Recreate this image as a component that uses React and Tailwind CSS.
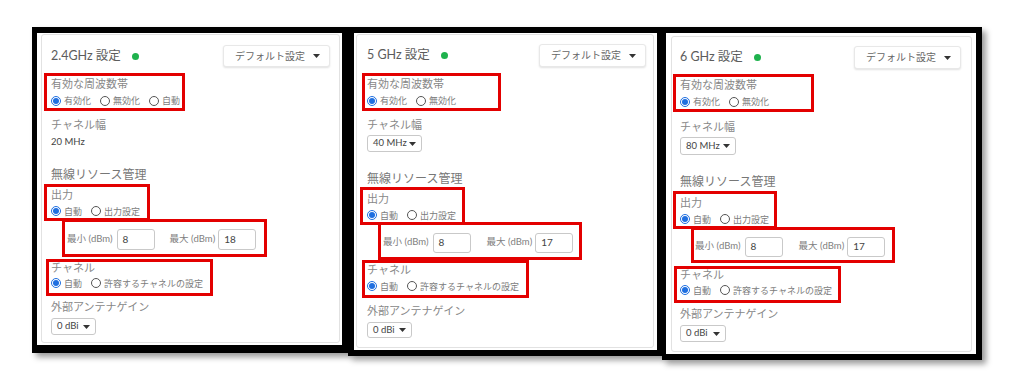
const Caret = ({ className = "" }) => (
  <svg width="7" height="4" viewBox="0 0 7 4" className={className}>
    <path d="M0 0h7L3.5 4z" fill="#333" />
  </svg>
);

const Radio = ({ label, checked }) => (
  <span className="flex items-center gap-[3px]">
    {checked ? (
      <span className="w-[10px] h-[10px] rounded-full border border-[#1f6fe0] flex items-center justify-center">
        <span className="w-[6px] h-[6px] rounded-full bg-[#1f6fe0]" />
      </span>
    ) : (
      <span className="w-[10px] h-[10px] rounded-full border border-[#555]" />
    )}
    <span className="text-[9px] text-[#7c7c7c] leading-none">{label}</span>
  </span>
);

const Select = ({ value, className }) => (
  <div
    className={`flex items-center justify-between border border-[#c9c9c9] rounded-[3px] bg-white pl-[5px] pr-[5px] text-[9.5px] text-[#444] ${className}`}
  >
    <span>{value}</span>
    <Caret />
  </div>
);

const Field = ({ value, className }) => (
  <div
    className={`flex items-center w-[38px] border border-[#c9c9c9] rounded-[3px] bg-white pl-[5px] text-[10px] text-[#444] ${className}`}
  >
    {value}
  </div>
);

const panels = [
  {
    title: "2.4GHz 設定",
    bands: ["有効化", "無効化", "自動"],
    chWidth: null,
    max: "18",
    frame: "w-[316px] border-t-[6px] border-l-[5px] border-r-[6px] border-b-[8px] pt-[1px] pl-[4px] pr-[2px] pb-[2px]",
    card: "h-[309px] pt-[10px] pl-[9px] pr-[9px]",
    header: "h-[22px]",
    box1: "mt-[6px] h-[38px] -ml-[7px] pl-[4px] w-[141px]",
    cw: "mt-[6px]",
    cwValue: "mt-[1px]",
    rrm: "mt-[16px]",
    outBox: "mt-0 h-[37px] -ml-[7px] pl-[4px] w-[106px]",
    outLabel: "h-[17px]",
    outRadios: "h-[14px]",
    box2: "-mt-[2px] h-[38px] ml-[11px] pl-[2px] w-[205px]",
    input: "h-[21px]",
    label2: "ml-[15px]",
    box3: "mt-[2px] h-[37px] -ml-[5px] pl-[2px] w-[167px]",
    chLabel: "h-[12px]",
    chRadios: "h-[18px]",
    ext: "mt-[2px]",
    ant: "mt-[2px] h-[17px] w-[45px]",
  },
  {
    title: "5 GHz 設定",
    bands: ["有効化", "無効化"],
    chWidth: "40 MHz",
    max: "17",
    frame: "w-[314px] border-t-[6px] border-l-[6px] border-r-[5px] border-b-[6px] pt-[1px] pl-[2px] pr-[3px] pb-[2px]",
    card: "h-[314px] pt-[9px] pl-[10px] pr-[7px]",
    header: "h-[23px]",
    box1: "mt-[6px] h-[38px] -ml-[5px] pl-[2px] w-[139px]",
    cw: "mt-[6px]",
    cwSelect: "mt-[2px] h-[17px] w-[55px]",
    rrm: "mt-[18px]",
    outBox: "-mt-[1px] h-[38px] -ml-[7px] pl-[4px] w-[105px]",
    outLabel: "h-[18px]",
    outRadios: "h-[14px]",
    box2: "-mt-[3px] h-[38px] ml-[11px] pl-[2px] w-[204px]",
    input: "h-[20px]",
    label2: "ml-[16px]",
    box3: "mt-0 h-[38px] -ml-[5px] pl-[2px] w-[167px]",
    chLabel: "h-[14px]",
    chRadios: "h-[18px]",
    ext: "mt-[4px]",
    ant: "mt-[2px] h-[16px] w-[45px]",
  },
  {
    title: "6 GHz 設定",
    bands: ["有効化", "無効化"],
    chWidth: "80 MHz",
    max: "17",
    frame: "w-[320px] border-t-[6px] border-l-[4px] border-r-[6px] border-b-[6px] pt-[3px] pl-[5px] pr-[4px] pb-[2px]",
    card: "h-[316px] pt-[9px] pl-[8px] pr-[10px]",
    header: "h-[23px]",
    box1: "mt-[5px] h-[38px] -ml-[7px] pl-[4px] w-[141px]",
    cw: "mt-[7px]",
    cwSelect: "mt-[2px] h-[18px] w-[56px]",
    rrm: "mt-[18px]",
    outBox: "mt-0 h-[38px] -ml-[7px] pl-[4px] w-[104px]",
    outLabel: "h-[18px]",
    outRadios: "h-[14px]",
    box2: "-mt-[2px] h-[36px] ml-[11px] pl-[1px] w-[204px]",
    input: "h-[20px]",
    label2: "ml-[16px]",
    box3: "mt-[3px] h-[37px] -ml-[6px] pl-[3px] w-[167px]",
    chLabel: "h-[12px]",
    chRadios: "h-[18px]",
    ext: "mt-[2px]",
    ant: "mt-[2px] h-[17px] w-[46px]",
  },
];

const Panel = ({ p }) => (
  <div className={`bg-white border-black shadow-[4px_4px_6px_rgba(0,0,0,0.4)] ${p.frame}`}>
    <div className={`flex flex-col border border-[#e2e2e2] rounded-[3px] bg-white ${p.card}`}>
      <div className={`flex items-center justify-between ${p.header}`}>
        <div className="flex items-center">
          <span className="text-[12.5px] text-[#5c5c5c]">{p.title}</span>
          <span className="ml-[11px] w-[7px] h-[7px] rounded-full bg-[#1fb24d]" />
        </div>
        <div className="h-full flex items-center gap-[8px] pl-[11px] pr-[9px] bg-white border border-[#e8e8e8] rounded-[3px] shadow-[0_1px_2px_rgba(0,0,0,0.12)] text-[10px] text-[#666]">
          デフォルト設定
          <Caret />
        </div>
      </div>

      <div className={`flex flex-col border-[3px] border-[#e30000] ${p.box1}`}>
        <div className="h-[17px] flex items-center text-[11px] text-[#888]">有効な周波数帯</div>
        <div className="h-[15px] flex items-center gap-[9px]">
          {p.bands.map((b, i) => (
            <Radio key={b} label={b} checked={i === 0} />
          ))}
        </div>
      </div>

      <div className={`h-[16px] flex items-center text-[11px] text-[#888] ${p.cw}`}>チャネル幅</div>
      {p.chWidth ? (
        <Select value={p.chWidth} className={p.cwSelect} />
      ) : (
        <div className={`h-[16px] flex items-center text-[9.5px] text-[#444] ${p.cwValue}`}>20 MHz</div>
      )}

      <div className={`h-[18px] flex items-center text-[12px] text-[#777] ${p.rrm}`}>無線リソース管理</div>

      <div className={`flex flex-col border-[3px] border-[#e30000] ${p.outBox}`}>
        <div className={`flex items-center text-[11px] text-[#888] ${p.outLabel}`}>出力</div>
        <div className={`flex items-center gap-[9px] ${p.outRadios}`}>
          <Radio label="自動" checked />
          <Radio label="出力設定" />
        </div>
      </div>

      <div className={`flex items-center pt-[3px] border-[3px] border-[#e30000] text-[9.5px] text-[#808080] ${p.box2}`}>
        <span>最小 (dBm)</span>
        <Field value="8" className={`ml-[4px] ${p.input}`} />
        <span className={p.label2}>最大 (dBm)</span>
        <Field value={p.max} className={`ml-[3px] ${p.input}`} />
      </div>

      <div className={`flex flex-col border-[3px] border-[#e30000] ${p.box3}`}>
        <div className={`flex items-center text-[11px] text-[#888] ${p.chLabel}`}>チャネル</div>
        <div className={`flex items-center gap-[9px] ${p.chRadios}`}>
          <Radio label="自動" checked />
          <Radio label="許容するチャネルの設定" />
        </div>
      </div>

      <div className={`h-[18px] flex items-center text-[11px] text-[#888] ${p.ext}`}>外部アンテナゲイン</div>
      <Select value="0 dBi" className={p.ant} />
    </div>
  </div>
);

export default function App() {
  return (
    <div className="w-[1016px] h-[385px] overflow-hidden bg-white font-[Lato,'Noto_Sans_CJK_JP',sans-serif]">
      <div className="flex items-start pt-[27px] pl-[32px]">
        {panels.map((p) => (
          <Panel key={p.title} p={p} />
        ))}
      </div>
    </div>
  );
}
